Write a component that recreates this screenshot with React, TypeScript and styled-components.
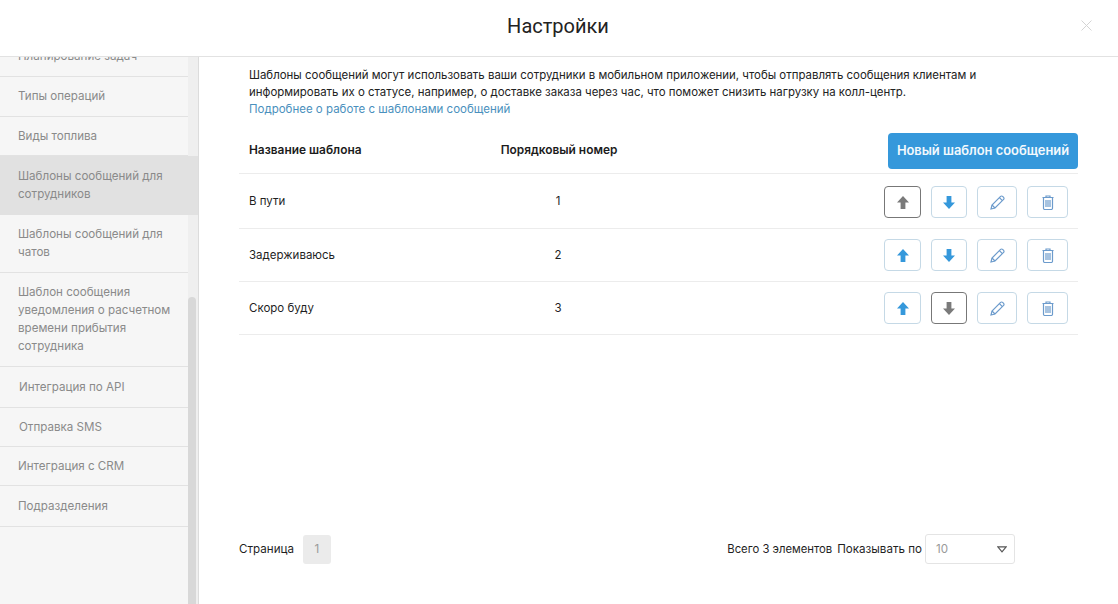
import React from "react";
import styled, { createGlobalStyle } from "styled-components";

const GlobalStyle = createGlobalStyle`
  html, body {
    margin: 0;
    padding: 0;
    background: #fff;
  }
  * {
    box-sizing: border-box;
  }
`;

const Page = styled.div`
  width: 1118px;
  height: 604px;
  display: flex;
  flex-direction: column;
  overflow: hidden;
  font-family: Inter, "Noto Sans", sans-serif;
  font-size: 11.6px;
  color: #1f1f1f;
`;

const Header = styled.header`
  height: 57px;
  flex: none;
  display: flex;
  align-items: center;
  justify-content: center;
  padding: 0 2px 4px 0;
  border-bottom: 1px solid #e2e2e2;
  position: relative;
`;

const Title = styled.h1`
  margin: 0;
  font-family: Roboto, sans-serif;
  font-size: 20px;
  font-weight: 400;
  color: #222;
`;

const Close = styled.button`
  position: absolute;
  top: 20px;
  right: 26px;
  width: 11px;
  height: 11px;
  padding: 0;
  border: 0;
  background: none;
  display: flex;
`;

const Body = styled.div`
  flex: 1;
  min-height: 0;
  display: flex;
`;

const Sidebar = styled.aside`
  width: 199px;
  flex: none;
  display: flex;
  background: #f6f6f6;
  border-right: 1px solid #dcdcdc;
  overflow: hidden;
`;

const MenuList = styled.nav`
  flex: 1;
  min-width: 0;
  margin-top: -20px;
`;

const MenuItem = styled.div<{ $active?: boolean; $height: number; $indent?: boolean }>`
  height: ${(p) => p.$height}px;
  display: flex;
  align-items: center;
  padding: 0 12px 1px ${(p) => (p.$indent ? 19 : 18)}px;
  margin-right: ${(p) => (p.$active ? -10 : 0)}px;
  position: relative;
  background: ${(p) => (p.$active ? "#e1e1e1" : "transparent")};
  border-bottom: 1px solid ${(p) => (p.$active ? "#e1e1e1" : "#e2e2e2")};
  color: #8a8a8a;
  line-height: 18px;
  z-index: ${(p) => (p.$active ? 1 : 0)};
`;

const ScrollTrack = styled.div`
  width: 10px;
  flex: none;
  background: #efefef;
  padding-top: 240px;
`;

const ScrollThumb = styled.div`
  height: 320px;
  width: 8px;
  border-radius: 4px 4px 0 0;
  background: #d8d8d8;
`;

const Content = styled.main`
  flex: 1;
  min-width: 0;
  display: flex;
  flex-direction: column;
  padding: 10px 40px 0;
`;

const Intro = styled.p`
  margin: 0;
  max-width: 760px;
  padding-left: 10px;
  font-size: 11.45px;
  line-height: 17px;
  color: #222;
`;

const MoreLink = styled.a`
  display: block;
  font-size: 11.5px;
  color: #4a90bd;
`;

const TableHead = styled.div`
  display: grid;
  grid-template-columns: 220px 180px 1fr;
  align-items: center;
  height: 48px;
  margin-top: 8px;
  padding-left: 10px;
  font-weight: 600;
  font-size: 11.9px;
  color: #1c1c1c;
  border-bottom: 1px solid #ececec;
`;

const NumberHead = styled.div`
  text-align: center;
`;

const NewButton = styled.button`
  justify-self: end;
  width: 190px;
  height: 36px;
  margin-top: 2px;
  border: 0;
  border-radius: 4px;
  background: #3598db;
  color: #f3f9fd;
  font-family: inherit;
  font-size: 12.9px;
  font-weight: 600;
`;

const Row = styled.div<{ $height: number }>`
  display: grid;
  grid-template-columns: 219px 180px 1fr;
  align-items: center;
  height: ${(p) => p.$height}px;
  padding-left: 10px;
  font-size: 11.5px;
  border-bottom: 1px solid #ececec;
`;

const NumberCell = styled.div`
  text-align: center;
`;

const Actions = styled.div<{ $nudge?: boolean }>`
  display: flex;
  justify-content: flex-end;
  gap: 10px;
  padding-right: 10px;
  margin-top: ${(p) => (p.$nudge ? 2 : 0)}px;
`;

const IconButton = styled.button<{ $focused?: boolean; $width: number }>`
  width: ${(p) => p.$width}px;
  height: 32px;
  padding: 0;
  display: flex;
  align-items: center;
  justify-content: center;
  background: #fff;
  border: 1px solid ${(p) => (p.$focused ? "#777" : "#c5d9e6")};
  border-radius: 4px;
  color: ${(p) => (p.$focused ? "#7a7a7a" : "#3598db")};
`;

const Footer = styled.div`
  margin-top: auto;
  margin-bottom: 40px;
  display: flex;
  align-items: center;
`;

const PageBadge = styled.span`
  width: 28px;
  height: 29px;
  margin-left: 9px;
  display: flex;
  align-items: center;
  justify-content: center;
  background: #ebebeb;
  border-radius: 3px;
  color: #999;
`;

const Total = styled.span`
  margin-left: auto;
  font-size: 11.3px;
  white-space: nowrap;
`;

const PerPage = styled.span`
  margin-left: 5px;
  white-space: nowrap;
`;

const Select = styled.div`
  width: 90px;
  height: 30px;
  margin-left: 3px;
  margin-right: 63px;
  padding: 0 7px 0 10px;
  display: flex;
  align-items: center;
  justify-content: space-between;
  border: 1px solid #e4e4e4;
  border-radius: 3px;
  color: #999;
`;

const ArrowUp = () => (
  <svg width="12" height="13" viewBox="0 0 12 13" fill="currentColor">
    <path d="M6 0 12 6.6H8.4V13H3.6V6.6H0z" />
  </svg>
);

const ArrowDown = () => (
  <svg width="12" height="13" viewBox="0 0 12 13" fill="currentColor">
    <path d="M6 13 0 6.4h3.6V0h4.8v6.4H12z" />
  </svg>
);

const Pencil = () => (
  <svg width="15" height="15" viewBox="0 0 15 15" fill="none" stroke="#6c9bcc" strokeWidth="1.2">
    <path d="M1 14l1-4 8.6-8.6a1.4 1.4 0 0 1 2 0l1 1a1.4 1.4 0 0 1 0 2L5 13z" />
    <path d="M2 10l3 3M9.4 2.6l3 3" />
  </svg>
);

const Trash = () => (
  <svg width="12" height="15" viewBox="0 0 12 15" fill="none" stroke="#6c9bcc" strokeWidth="1.2">
    <path d="M0.5 2.5h11M4 2.5V1h4v1.5" />
    <path d="M1.5 2.5v10.7a1.3 1.3 0 0 0 1.3 1.3h6.4a1.3 1.3 0 0 0 1.3-1.3V2.5" />
    <path d="M4 5v7M6 5v7M8 5v7" />
  </svg>
);

const menu = [
  { label: "Планирование задач", height: 40 },
  { label: "Типы операций", height: 40 },
  { label: "Виды топлива", height: 39 },
  { label: "Шаблоны сообщений для сотрудников", height: 59, active: true },
  { label: "Шаблоны сообщений для чатов", height: 58 },
  { label: "Шаблон сообщения уведомления о расчетном времени прибытия сотрудника", height: 94 },
  { label: "Интеграция по API", height: 41, indent: true },
  { label: "Отправка SMS", height: 39, indent: true },
  { label: "Интеграция с CRM", height: 39 },
  { label: "Подразделения", height: 41 },
];

const rows = [
  { name: "В пути", order: 1, height: 55, focus: "up" },
  { name: "Задерживаюсь", order: 2, height: 53 },
  { name: "Скоро буду", order: 3, height: 53, focus: "down" },
];

const App = () => {
  return (
    <Page>
      <GlobalStyle />
      <Header>
        <Title>Настройки</Title>
        <Close aria-label="Закрыть">
          <svg width="11" height="11" viewBox="0 0 11 11" stroke="#d4d4d4" strokeWidth="1">
            <path d="M0.5 0.5l10 10M10.5 0.5l-10 10" />
          </svg>
        </Close>
      </Header>
      <Body>
        <Sidebar>
          <MenuList>
            {menu.map((item) => (
              <MenuItem key={item.label} $active={item.active} $height={item.height} $indent={item.indent}>
                {item.label}
              </MenuItem>
            ))}
          </MenuList>
          <ScrollTrack>
            <ScrollThumb />
          </ScrollTrack>
        </Sidebar>
        <Content>
          <Intro>
            Шаблоны сообщений могут использовать ваши сотрудники в мобильном приложении, чтобы отправлять сообщения клиентам и
            информировать их о статусе, например, о доставке заказа через час, что поможет снизить нагрузку на колл-центр.
            <MoreLink>Подробнее о работе с шаблонами сообщений</MoreLink>
          </Intro>
          <TableHead>
            <div>Название шаблона</div>
            <NumberHead>Порядковый номер</NumberHead>
            <NewButton>Новый шаблон сообщений</NewButton>
          </TableHead>
          {rows.map((row) => (
            <Row key={row.name} $height={row.height}>
              <div>{row.name}</div>
              <NumberCell>{row.order}</NumberCell>
              <Actions $nudge={row.order === 1}>
                <IconButton $width={37} $focused={row.focus === "up"}>
                  <ArrowUp />
                </IconButton>
                <IconButton $width={36} $focused={row.focus === "down"}>
                  <ArrowDown />
                </IconButton>
                <IconButton $width={40}>
                  <Pencil />
                </IconButton>
                <IconButton $width={41}>
                  <Trash />
                </IconButton>
              </Actions>
            </Row>
          ))}
          <Footer>
            Страница
            <PageBadge>1</PageBadge>
            <Total>Всего 3 элементов</Total>
            <PerPage>Показывать по</PerPage>
            <Select>
              10
              <svg width="10" height="7" viewBox="0 0 10 7" fill="none" stroke="#555" strokeWidth="1.2">
                <path d="M0.8 0.8h8.4L5 5.8z" />
              </svg>
            </Select>
          </Footer>
        </Content>
      </Body>
    </Page>
  );
};

export default App;
